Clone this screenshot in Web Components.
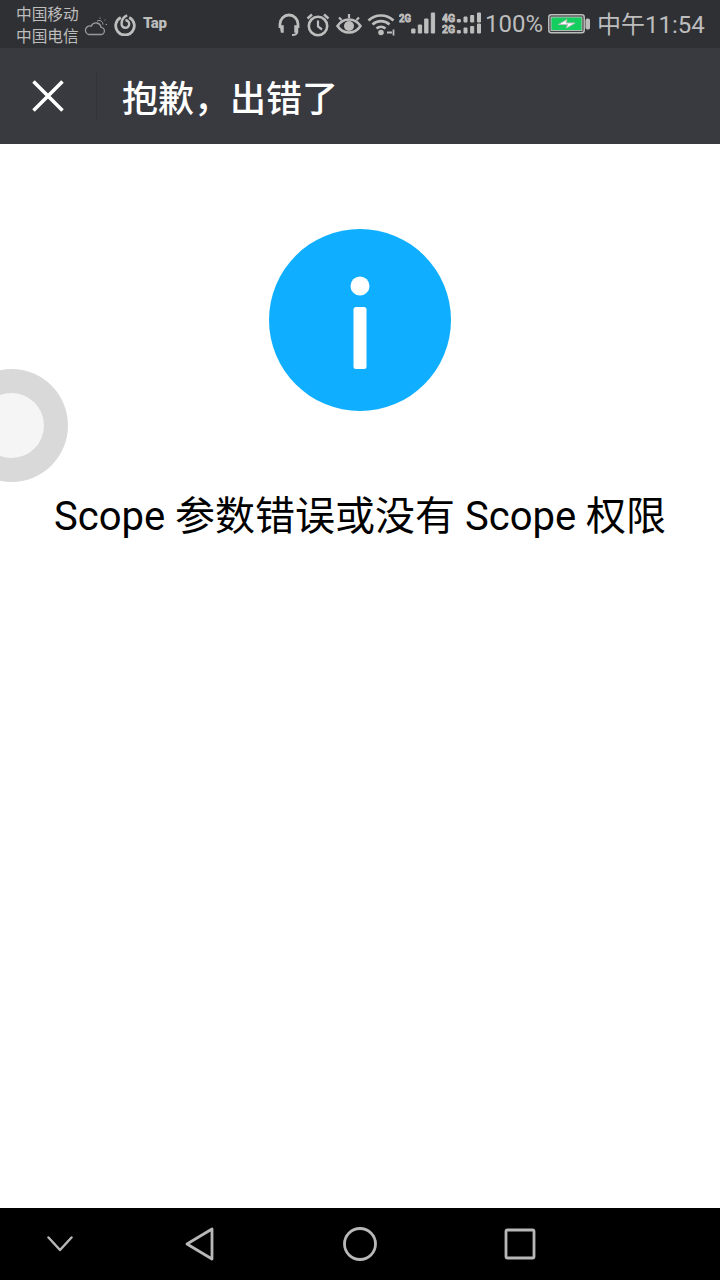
<!DOCTYPE html>
<html>

<head>
    <meta charset="utf-8">
    <title>抱歉&#xFF0C;出错了</title>
    <style>
        html, body { margin: 0; padding: 0; background: #fff; }
    </style>
</head>

<body>
    <app-screen>
        <status-bar slot="status"></status-bar>
        <title-bar slot="title">抱歉&#xFF0C;出错了</title-bar>
        <msg-page>Scope 参数错误或没有 Scope 权限</msg-page>
        <nav-bar slot="nav"></nav-bar>
        <float-ball slot="overlay"></float-ball>
    </app-screen>

    <template id="app-screen">
        <style>
            :host {
                display: flex;
                flex-direction: column;
                position: relative;
                width: 720px;
                height: 1280px;
                overflow: hidden;
                font-family: "Noto Sans CJK SC", Roboto, sans-serif;
            }
            main { flex: 1; display: flex; flex-direction: column; }
        </style>
        <slot name="status"></slot>
        <slot name="title"></slot>
        <main><slot></slot></main>
        <slot name="nav"></slot>
        <slot name="overlay"></slot>
    </template>

    <template id="status-bar">
        <style>
            :host {
                display: flex;
                align-items: center;
                height: 48px;
                flex: none;
                background: #2f3034;
                color: #bdbdbd;
                font-family: Roboto, "Noto Sans CJK SC", sans-serif;
            }
            svg { display: block; flex: none; fill: none; stroke: #bdbdbd; }
            text { font-family: Roboto, sans-serif; font-size: 11px; font-weight: 500; fill: #bdbdbd; }
            .carrier {
                margin-left: 16px;
                width: 64px;
                font: 15.7px/22px "Noto Sans CJK SC", sans-serif;
                white-space: nowrap;
                margin-top: 2px;
            }
            .tap { margin-left: 7px; width: 26px; font: 900 15px/1 Roboto, sans-serif; margin-top: -2px; letter-spacing: -.4px; }
            .spacer { flex: 1; }
            .pct { margin-left: 3px; width: 58px; font-size: 24px; line-height: 1; margin-top: 0; white-space: nowrap; }
            .clock { margin-left: 7px; margin-right: 17px; width: 106px; font-size: 24px; line-height: 1; white-space: nowrap; margin-top: 2px; }
        </style>
        <div class="carrier">中国移动<br>中国电信</div>
        <svg width="24" height="22" viewBox="0 0 24 22" style="margin-left:4px;margin-top:5px;stroke:#9a9a9a" stroke-width="1.3">
            <path d="M4.500 18.500h12a3.600 3.600 0 0 0 .6-7.200 5.200 5.200 0 0 0-9.900-1.200 4.300 4.300 0 0 0-2.700 8.400z" />
            <path d="M13 5.200a3.800 3.800 0 0 1 6 3.400M16 1.500v1.300M21.500 3.500l-1 1M23 8.500h-1.300" stroke-width="1" />
        </svg>
        <svg width="22" height="22" viewBox="0 0 22 22" style="margin-left:6px;margin-top:2px" stroke-width="2.800">
            <path d="M6.800 3.400a9.300 9.300 0 1 0 8.400 0" />
            <path d="M13.200 1.400c-3.600 1.400-5.600 4.800-5.600 8.400a3.800 3.800 0 1 0 3.800-3.600" stroke-width="2.400" />
        </svg>
        <div class="tap">Tap</div>
        <div class="spacer"></div>
        <svg width="24" height="24" viewBox="0 0 24 24" stroke-width="2.800" style="margin-top:1px">
            <path d="M3 15v-4a9 9 0 0 1 18 0v4" />
            <path d="M3.500 13h2.500v6H4.500zM20.500 13H18v6h2.500z" fill="#bdbdbd" stroke-width="1.500" />
            <path d="M20 19c0 2-2 3-5 3" stroke-width="2" />
        </svg>
        <svg width="24" height="24" viewBox="0 0 24 24" stroke-width="2.600" style="margin-left:5px;margin-top:1px">
            <circle cx="12" cy="13" r="9.200" />
            <path d="M12 7.500v6l4 3" stroke-width="2.200" />
            <path d="M1.500 5.500 6 1.500M22.500 5.500 18 1.500" stroke-width="2.400" />
        </svg>
        <svg width="26" height="24" viewBox="0 0 26 24" stroke-width="2.600" style="margin-left:6px;margin-top:1px">
            <path d="M1.500 13c3-4.500 7-6.500 11.500-6.500S21.500 8.500 24.500 13c-3 4.500-7 6.500-11.500 6.500S4.500 17.500 1.500 13z" />
            <circle cx="13" cy="13" r="5" fill="#bdbdbd" stroke="none" />
            <path d="M3 4.500 5.500 7M13 1v4M23 4.500 20.500 7" stroke-width="2.200" />
        </svg>
        <svg width="30" height="24" viewBox="0 0 30 24" stroke-width="2.600" style="margin-left:5px;margin-top:-1px">
            <path d="M1.500 8.500a18 18 0 0 1 25 0M5.500 12.500a12.500 12.500 0 0 1 17 0M9.500 16.500a7 7 0 0 1 9 0" />
            <circle cx="14" cy="20.500" r="2.800" fill="#bdbdbd" stroke="none" />
            <path d="M20 20.500h5M26.500 17.500v6" stroke-width="1.800" />
        </svg>
        <svg width="38" height="26" viewBox="0 0 38 26" stroke="none" style="margin-left:2px;margin-top:1px">
            <text x="0" y="10" textLength="12" lengthAdjust="spacingAndGlyphs">2G</text>
            <path fill="#bdbdbd" d="M12.700 17h3.300v4h-3.300zM19.300 13h3.300v8h-3.300zM25.700 7h3.300v14h-3.300zM32.300 1h3.300v20h-3.300z" />
        </svg>
        <svg width="40" height="26" viewBox="0 0 40 26" stroke="none" style="margin-left:5px;margin-top:1px">
            <text x="0" y="10" textLength="13" lengthAdjust="spacingAndGlyphs">4G</text>
            <text x="0" y="21" textLength="13" lengthAdjust="spacingAndGlyphs">2G</text>
            <path fill="#bdbdbd" d="M15.300 7.500h3v2.500h-3zM22 5h3v5h-3zM28.700 3.500h3v6.500h-3zM35.500 1h3v9h-3zM15.300 18.500h3v2.500h-3zM22 16h3v5h-3zM28.700 14.500h3v6.500h-3zM35.500 12h3v9h-3z" />
        </svg>
        <div class="pct">100%</div>
        <svg width="42" height="20" viewBox="0 0 42 20" stroke="none" style="margin-left:5px">
            <rect x=".8" y=".8" width="35.400" height="18" rx="2.500" fill="none" stroke="#bdbdbd" stroke-width="1.500" />
            <rect x="3" y="3" width="31" height="13.600" fill="#14cf5f" />
            <path fill="#fff" d="M10.500 10.500 19 5.500l-1 3.500h9l-8.500 5 1-3.500z" />
            <rect x="38" y="5" width="3.500" height="10" rx="1" fill="#bdbdbd" />
        </svg>
        <div class="clock">中午11:54</div>
    </template>

    <template id="title-bar">
        <style>
            :host {
                display: flex;
                align-items: center;
                flex: none;
                height: 96px;
                background: #393a3f;
                color: #fff;
            }
            .close { width: 96px; height: 48px; display: flex; align-items: center; justify-content: center; border-right: 1px solid #323338; box-sizing: content-box; }
            svg { display: block; }
            .text {
                margin-left: 25px;
                font: 500 36px/1 "Noto Sans CJK SC", sans-serif;
                white-space: nowrap;
            }
        </style>
        <div class="close">
            <svg width="32" height="32" viewBox="0 0 32 32" fill="none" stroke="#fff" stroke-width="3.600">
                <path d="M1.500 1.500 30.500 30.500M30.500 1.500 1.500 30.500" />
            </svg>
        </div>
        <div class="text"><slot></slot></div>
    </template>

    <template id="msg-page">
        <style>
            :host {
                display: flex;
                flex-direction: column;
                align-items: center;
                flex: 1;
                background: #fff;
                color: #000;
                padding-top: 85px;
            }
            svg { display: block; }
            p {
                margin: 78px 0 0;
                font: 40px/1.4 Roboto, "Noto Sans CJK SC", sans-serif;
                white-space: nowrap;
            }
        </style>
        <svg width="182" height="182" viewBox="0 0 182 182">
            <circle cx="91" cy="91" r="91" fill="#10aeff" />
            <circle cx="91" cy="57" r="9.500" fill="#fff" />
            <rect x="84.500" y="78" width="13" height="62" rx="2.500" fill="#fff" />
        </svg>
        <p><slot></slot></p>
    </template>

    <template id="nav-bar">
        <style>
            :host {
                display: grid;
                grid-template-columns: 120px 160px 160px 160px 120px;
                align-items: center;
                justify-items: center;
                flex: none;
                height: 72px;
                background: #000;
            }
            svg { display: block; fill: none; stroke: #b8b8b8; stroke-width: 2.800; stroke-linejoin: round; stroke-linecap: round; }
        </style>
        <svg width="26" height="16" viewBox="0 0 26 16" style="stroke-width:2.400"><path d="M1.500 1.500 13 14 24.500 1.500" /></svg>
        <svg width="30" height="34" viewBox="0 0 30 34"><path d="M27 2v30L2 17z" /></svg>
        <svg width="34" height="34" viewBox="0 0 34 34"><circle cx="17" cy="17" r="15.500" /></svg>
        <svg width="32" height="32" viewBox="0 0 32 32"><rect x="2" y="2" width="28" height="28" rx="1.500" /></svg>
        <span></span>
    </template>

    <template id="float-ball">
        <style>
            /* sits over the page, half off the left edge */
            :host {
                position: absolute;
                left: -45px;
                top: 369px;
                width: 113px;
                height: 113px;
                border-radius: 50%;
                background: #d9d9d9;
                display: flex;
                align-items: center;
                justify-content: center;
            }
            div { width: 65px; height: 65px; border-radius: 50%; background: #f5f5f5; }
        </style>
        <div></div>
    </template>

    <script>
        // every tag here has a template of the same id
        const tags = ['app-screen', 'status-bar', 'title-bar', 'msg-page', 'nav-bar', 'float-ball']

        tags.forEach(tag => {
            customElements.define(tag, class extends HTMLElement {
                constructor() {
                    super()
                    const content = document.getElementById(tag).content
                    this.attachShadow({ mode: 'open' }).appendChild(content.cloneNode(true))
                }
            })
        })
    </script>
</body>

</html>
